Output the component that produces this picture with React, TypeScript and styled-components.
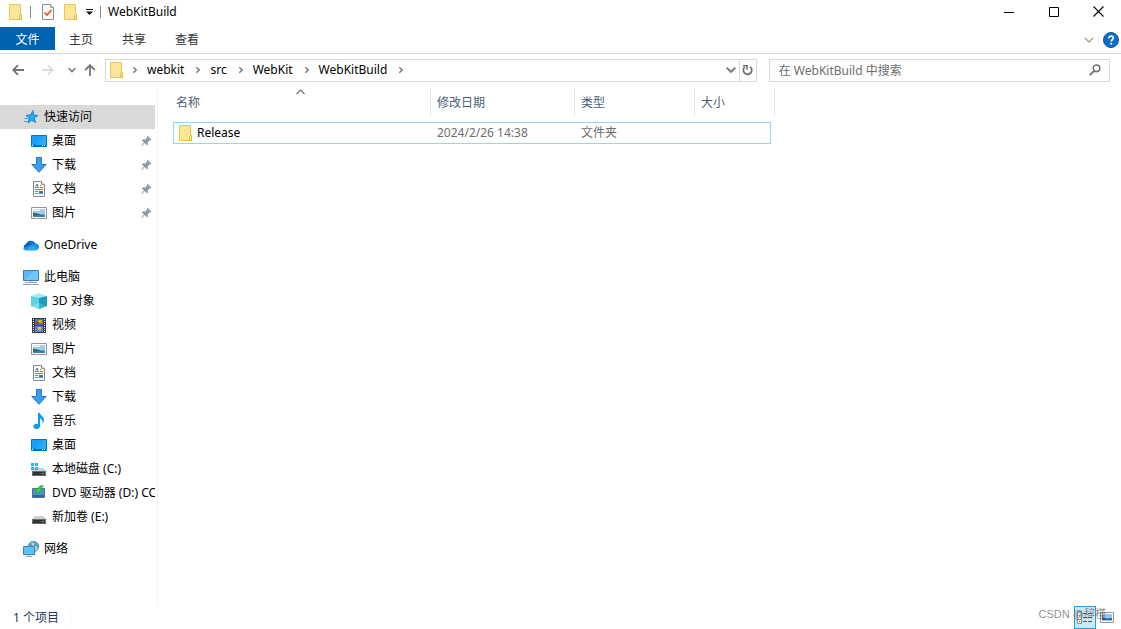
import React from "react";
import styled, { createGlobalStyle, css } from "styled-components";

const Global = createGlobalStyle`
  *, *::before, *::after { box-sizing: border-box; }
  html, body { margin: 0; padding: 0; background: #fff; }
  body, button, input, table {
    font-family: "Noto Sans", "Noto Sans CJK SC", sans-serif;
    font-size: 12px;
    line-height: 16px;
    color: #000;
  }
  button { border: 0; padding: 0; margin: 0; background: none; cursor: default; }
  a { color: inherit; text-decoration: none; }
  svg { display: block; flex: none; }
`;

/* ---------- layout ---------- */

const Window = styled.div`
  display: flex;
  flex-direction: column;
  min-height: 100vh;
  background: #fff;
`;

const TitleBar = styled.header`
  display: flex;
  align-items: center;
  height: 27px;
  padding: 0 0 4px 8px;
`;

const QuickButton = styled.button<{ $width?: number }>`
  display: flex;
  align-items: center;
  justify-content: center;
  width: ${(p) => p.$width ?? 16}px;
  height: 20px;
`;

const Separator = styled.span<{ $before: number; $after: number }>`
  width: 1px;
  height: 12px;
  margin: 0 ${(p) => p.$after}px 0 ${(p) => p.$before}px;
  background: #8a8a8a;
`;

const Title = styled.h1`
  flex: 1;
  margin: 0;
  font-size: 12px;
  font-weight: 400;
  line-height: 16px;
`;

const CaptionButton = styled.button`
  display: flex;
  align-items: center;
  justify-content: center;
  width: 45px;
  height: 23px;
`;

const Ribbon = styled.nav`
  display: flex;
  align-items: flex-start;
  height: 27px;
  border-bottom: 1px solid #dadbdc;
`;

const Tab = styled.button<{ $file?: boolean }>`
  height: 23px;
  padding: 2px 14px 0;
  margin-right: 1px;
  width: 52px;
  color: #333;
  white-space: nowrap;
  ${(p) =>
    p.$file &&
    css`
      width: 55px;
      background: #0063b1;
      color: #fff;
      margin-right: 0;
    `}
`;

const RibbonTools = styled.div`
  display: flex;
  align-items: center;
  gap: 9px;
  height: 26px;
  margin-left: auto;
  padding-right: 2px;
`;

const AddressRow = styled.div`
  display: flex;
  align-items: center;
  height: 34px;
  padding: 0 11px 2px 9px;
`;

const NavButton = styled.button<{ $width: number }>`
  display: flex;
  align-items: center;
  justify-content: center;
  width: ${(p) => p.$width}px;
  height: 20px;
`;

const AddressBox = styled.div`
  display: flex;
  align-items: center;
  flex: 1;
  height: 23px;
  padding-left: 4px;
  border: 1px solid #d9d9d9;
`;

const Crumbs = styled.ol`
  display: flex;
  align-items: center;
  flex: 1;
  margin: 0;
  padding: 0 0 1px 8px;
  list-style: none;
`;

const Crumb = styled.li`
  display: flex;
  align-items: center;
  a { padding: 0 11px 0 9px; }
`;

const RefreshButton = styled.button`
  display: flex;
  align-items: center;
  justify-content: center;
  width: 17px;
  height: 21px;
  border-left: 1px solid #d9d9d9;
`;

const SearchBox = styled.label`
  display: flex;
  align-items: center;
  flex: 0 0 31%;
  height: 23px;
  margin-left: 12px;
  padding: 0 8px 0 9px;
  border: 1px solid #d9d9d9;
`;

const SearchInput = styled.input`
  flex: 1;
  min-width: 0;
  height: 20px;
  padding: 0;
  border: 0;
  outline: 0;
  background: none;
  &::placeholder { color: #6d6d6d; opacity: 1; }
`;

const Body = styled.div`
  display: flex;
  flex: 1;
`;

const Sidebar = styled.nav`
  flex: none;
  width: 158px;
  padding: 17px 2px 0 0;
  border-right: 1px solid #f4f4f4;
`;

const Group = styled.ul`
  margin: 0 0 8px;
  padding: 0;
  list-style: none;
`;

const Item = styled.a<{ $child?: boolean; $selected?: boolean }>`
  display: flex;
  align-items: center;
  gap: 5px;
  height: 24px;
  padding: 0 0 0 ${(p) => (p.$child ? 31 : 23)}px;
  background: ${(p) => (p.$selected ? "#d9d9d9" : "transparent")};
`;

const ItemLabel = styled.span`
  flex: 1;
  overflow: hidden;
  white-space: nowrap;
`;

const PinSlot = styled.span`
  margin-right: 3px;
`;

const Content = styled.main`
  flex: 1;
  min-width: 0;
  padding-left: 15px;
`;

const FileTable = styled.table`
  table-layout: fixed;
  width: 602px;
  border-spacing: 0;
`;

const HeadCell = styled.th<{ $width: number }>`
  position: relative;
  width: ${(p) => p.$width}px;
  padding: 0 0 6px;
  text-align: left;
  font-weight: 400;
`;

const HeadButton = styled.button<{ $first?: boolean }>`
  display: block;
  width: 100%;
  height: 28px;
  padding: 1px 0 0 ${(p) => (p.$first ? 3 : 6)}px;
  border-right: 1px solid #e5e5e5;
  text-align: left;
  color: #4c607a;
`;

const SortMark = styled.span`
  position: absolute;
  top: 1px;
  left: 50%;
  margin-left: -6px;
`;

const FileRow = styled.tr`
  position: relative;
  height: 22px;
  &::after {
    content: "";
    position: absolute;
    inset: 0 4px 0 0;
    border: 1px solid #99d1ff;
    pointer-events: none;
  }
`;

const Cell = styled.td`
  padding: 0 0 0 6px;
  color: #6d6d6d;
`;

const FileName = styled.div`
  display: flex;
  align-items: center;
  gap: 4px;
  color: #000;
`;

const StatusBar = styled.footer`
  display: flex;
  align-items: center;
  position: relative;
  height: 23px;
  padding: 0 3px 0 13px;
  color: #1e395b;
`;

const StatusText = styled.span`
  padding-right: 11px;
  margin-right: auto;
  border-right: 1px solid #f4f4f4;
`;

const ViewButton = styled.button<{ $active?: boolean }>`
  display: flex;
  align-items: center;
  justify-content: center;
  width: 22px;
  height: 23px;
  border: 1px solid ${(p) => (p.$active ? "#26a0da" : "transparent")};
  background: ${(p) => (p.$active ? "#cbe8f6" : "none")};
`;

const Watermark = styled.span`
  position: absolute;
  right: 15px;
  top: 0;
  font-family: "Liberation Sans", "Noto Sans CJK SC", sans-serif;
  font-size: 11px;
  color: rgba(90, 90, 90, 0.7);
  pointer-events: none;
`;

/* ---------- icons ---------- */

const FolderIcon = () => (
  <svg width="14" height="16" viewBox="0 0 14 16">
    <path d="M.5.5h11v10h1v5H.5z" fill="#ffe597" stroke="#eac754" />
    <path d="M10.5 15.5v-4l1-1h1v5z" fill="#ffe9a2" stroke="#e3b93a" />
  </svg>
);

const PropertiesIcon = () => (
  <svg width="12" height="16" viewBox="0 0 12 16">
    <path d="M.5.5h8l3 3v12H.5z" fill="#f8f8f8" stroke="#8b8b8b" />
    <path d="M8.5.5v3h3" fill="#ddd" stroke="#9b9b9b" />
    <path d="M2.500 8.500l2.500 2.500 4.500-5" fill="none" stroke="#e8531f" strokeWidth="1.700" />
  </svg>
);

const CustomizeIcon = () => (
  <svg width="7" height="6" viewBox="0 0 7 6">
    <path d="M0 0h7v1H0zM0 2.500h7L3.500 6z" fill="#111" />
  </svg>
);

const MinimizeIcon = () => (
  <svg width="10" height="10" viewBox="0 0 10 10"><path d="M0 5h10v1H0z" /></svg>
);
const MaximizeIcon = () => (
  <svg width="10" height="10" viewBox="0 0 10 10"><path d="M.5.5h9v9h-9z" fill="none" stroke="#000" /></svg>
);
const CloseIcon = () => (
  <svg width="11" height="11" viewBox="0 0 11 11"><path d="M.5.5l10 10M10.500.5l-10 10" fill="none" stroke="#000" strokeWidth="1.100" /></svg>
);

const ChevronDown = ({ size = 8, color = "#777", weight = 1.5 }: { size?: number; color?: string; weight?: number }) => (
  <svg width={size} height={size} viewBox="0 0 8 8">
    <path d="M.6 2.200L4 5.600l3.400-3.400" fill="none" stroke={color} strokeWidth={weight} />
  </svg>
);

const ChevronRight = () => (
  <svg width="6" height="8" viewBox="0 0 6 8">
    <path d="M1.300 1.200L4.200 4 1.300 6.800" fill="none" stroke="#777" strokeWidth="1.500" />
  </svg>
);

const SortIcon = () => (
  <svg width="9" height="6" viewBox="0 0 9 6">
    <path d="M.5 5l4-4 4 4" fill="none" stroke="#6b6b6b" strokeWidth="1.100" />
  </svg>
);

const ArrowIcon = ({ turn = 0, color = "#757575" }: { turn?: number; color?: string }) => (
  <svg width="12" height="12" viewBox="0 0 12 12">
    <path
      d="M12 6H1.500M6 1.200L1.200 6 6 10.800"
      transform={`rotate(${turn} 6 6)`}
      fill="none"
      stroke={color}
      strokeWidth="1.800"
    />
  </svg>
);

const HelpIcon = () => (
  <svg width="16" height="16" viewBox="0 0 16 16">
    <circle cx="8" cy="8" r="7.500" fill="#0f6fc8" stroke="#0a569e" />
    <path d="M5.800 6.200c0-2.900 4.600-2.700 4.500-.1 0 1.500-2.100 1.600-2.100 3.400" fill="none" stroke="#fff" strokeWidth="1.700" />
    <path d="M7.300 10.800h1.800v1.800H7.300z" fill="#fff" />
  </svg>
);

const RefreshIcon = () => (
  <svg width="11" height="12" viewBox="0 0 11 12">
    <path d="M8.200 2.900A4.200 4.200 0 1 1 2.600 3.200" fill="none" stroke="#6b6b6b" strokeWidth="1.700" />
    <path d="M1 1.700h4v4" fill="none" stroke="#6b6b6b" strokeWidth="1.500" />
  </svg>
);

const SearchIcon = () => (
  <svg width="12" height="12" viewBox="0 0 12 12">
    <circle cx="7.500" cy="4.300" r="3.300" fill="none" stroke="#707070" strokeWidth="1.600" />
    <path d="M5.200 6.800L.8 11.200" stroke="#707070" strokeWidth="1.900" />
  </svg>
);

const StarIcon = () => (
  <svg width="16" height="16" viewBox="0 0 16 16">
    <path d="M9.800 1.500l.9 4.500 4.300.4-3.700 2.600 1.300 4.500-3.900-2.200L5 14l1.200-4.800L3.300 6.300l4.300-.5z" fill="#27a9f2" stroke="#0b7fcb" strokeWidth=".8" />
    <path d="M1.500 9.500h3.500M1 12.500h3.500M3 7.500h2" stroke="#3f9edc" />
  </svg>
);

const DesktopIcon = () => (
  <svg width="16" height="16" viewBox="0 0 16 16">
    <path d="M.5 2.500h15v11H.5z" fill="#17a1fb" stroke="#0873bb" />
    <path d="M6 12L13 3h2v9z" fill="#3db3ff" opacity=".6" />
    <path d="M1 12h14v1H1z" fill="#0a66a8" />
    <path d="M1 12h1v1H1zM11 12h1v1h-1zM13 12h1v1h-1z" fill="#fff" />
  </svg>
);

const DownloadIcon = () => (
  <svg width="16" height="16" viewBox="0 0 16 16">
    <path d="M5.500.5h5v7h4.700L8 15.300.8 7.500h4.700z" fill="#3f9bea" stroke="#2b7cc9" />
  </svg>
);

const DocumentIcon = () => (
  <svg width="16" height="16" viewBox="0 0 16 16">
    <path d="M2.500.5h8l3 3v12h-11z" fill="#fff" stroke="#888" />
    <path d="M10.500.5v3h3" fill="#e4e4e4" stroke="#999" />
    <path d="M4 6.500h4M9 4.500h1M9 6.500h3M4 8.500h8M4 10.500h3M4 12.500h3M8 12.500h4" stroke="#3d9be0" />
    <path d="M4.500 5.500l1.500-2.500 1 3" fill="none" stroke="#1d7cc4" />
    <path d="M8 10h4v2H8z" fill="#2b7a9c" />
  </svg>
);

const PictureIcon = () => (
  <svg width="16" height="16" viewBox="0 0 16 16">
    <path d="M.5 2.500h15v11H.5z" fill="#fff" stroke="#959595" />
    <path d="M2 4h12v8H2z" fill="#a2cdf3" />
    <path d="M2 4h7v2H2z" fill="#dceefa" />
    <path d="M2 7.500l4 .8 4 1.200 4 .3V12H2z" fill="#3c6c68" />
    <path d="M2 11l5-1 7 .5V12H2z" fill="#3b7eb0" />
  </svg>
);

const CloudIcon = () => (
  <svg width="16" height="16" viewBox="0 0 16 16">
    <path d="M3.200 13.300a3.200 3.200 0 0 1-.2-6.200A5.200 5.200 0 0 1 12.400 6.400 3.500 3.500 0 0 1 13 13.300z" fill="#0a5fb4" />
    <path d="M5 5.500a5 5 0 0 1 7.400.9l-2.600 2.400z" fill="#0f74cf" />
    <path d="M3 13.300c-2 0-2.700-1.300-2.700-2.300L8 8l5-1.500c2 .4 3 2 2.700 3.800z" fill="#1c93e3" />
    <path d="M2 13L9.500 9l6.200 2.300c-.4 1.200-1.300 2-2.700 2H3.200c-.6 0-.9-.1-1.200-.3z" fill="#2aa5f0" />
  </svg>
);

const ComputerIcon = () => (
  <svg width="16" height="16" viewBox="0 0 16 16">
    <path d="M.5 1.500h15v10H.5z" fill="#56bbfa" stroke="#45799f" />
    <path d="M1 11L12 2h3v9z" fill="#7fd0ff" opacity=".6" />
    <path d="M6 12h4v1H6z" fill="#d4dde3" />
    <path d="M2 13.500h12M0 15.500h16" stroke="#8ea3b3" />
  </svg>
);

const CubeIcon = () => (
  <svg width="16" height="16" viewBox="0 0 16 16">
    <path d="M0 3l8-3 8 3-8 3z" fill="#a8ecf3" />
    <path d="M0 3l8 2v11l-8-3z" fill="#5cd0de" />
    <path d="M16 3L8 5v11l8-3z" fill="#1a9fb6" />
    <path d="M0 13l8-3v6z" fill="#8be5ee" opacity=".7" />
    <path d="M16 13l-8-3v6z" fill="#37bccf" opacity=".8" />
  </svg>
);

const VideoIcon = () => (
  <svg width="16" height="16" viewBox="0 0 16 16">
    <path d="M1 1h14v15H1z" fill="#3a3a3a" />
    <path d="M4 2h8v6H4z" fill="#4674c2" />
    <path d="M4 9h8v6H4z" fill="#5b84d6" />
    <path d="M7 3h4v3H7z" fill="#e0a033" />
    <path d="M5 5h3v2H5z" fill="#a83a32" />
    <path d="M7 10h3v3H7z" fill="#e6bd3c" />
    <path d="M2.500 2v13M13.500 2v13" stroke="#eee" strokeDasharray="1 1" />
  </svg>
);

const MusicIcon = () => (
  <svg width="16" height="16" viewBox="0 0 16 16">
    <path d="M7 0h2c.3 2.800 4 3.500 4 7 0 1.500-.6 2.700-1.500 3.500C12 7.800 10.800 6 9 5.500V13c0 1.800-1.500 3-3.500 3S2.300 14.900 2.300 13.500c0-1.800 2.200-3.200 4.700-2.500z" fill="#0c9bf2" />
  </svg>
);

const Drive = () => (
  <>
    <path d="M3.500 7h9L15 10H1z" fill="#cfcfcf" />
    <path d="M1 10h14v5H1z" fill="#6b6b6b" />
    <path d="M2 11h12v3H2z" fill="#333" />
    <path d="M11 12h2v1h-2z" fill="#47dc52" />
  </>
);

const SystemDiskIcon = () => (
  <svg width="16" height="16" viewBox="0 0 16 16">
    <Drive />
    <path d="M0 2h3v3H0zM4 2h3v3H4zM0 6h3v3H0zM4 6h3v3H4z" fill="#16bff0" />
  </svg>
);

const DiskIcon = () => (
  <svg width="16" height="16" viewBox="0 0 16 16"><Drive /></svg>
);

const DvdIcon = () => (
  <svg width="16" height="16" viewBox="0 0 16 16">
    <path d="M1.500 3.500h12v9h-12z" fill="#4f8fd0" stroke="#5a6f88" />
    <path d="M2 10h11v2H2z" fill="#2f66a8" />
    <path d="M12.500.8L9.500 4.500 11 6.500l-6 2-.5-5.500L6.500 4 9 .8z" fill="#35d14d" stroke="#1b9a36" strokeWidth=".6" />
  </svg>
);

const NetworkIcon = () => (
  <svg width="16" height="16" viewBox="0 0 16 16">
    <circle cx="10.500" cy="5.500" r="5.200" fill="#5c9cc4" stroke="#3f769a" strokeWidth=".6" />
    <path d="M8 2c2-1.500 4 0 3 1.500s1 2 3 1.500l.5 3-2 1.500z" fill="#b5dbe6" />
    <path d="M.5 5.500h11v8H.5z" fill="#5dc1fb" stroke="#3c82b1" />
    <path d="M3 15.500h6" stroke="#8ea3b3" />
    <path d="M5 14h2v1H5z" fill="#bcc8d0" />
  </svg>
);

const PinIcon = () => (
  <svg width="11" height="12" viewBox="0 0 11 12">
    <path d="M6.500.8l4 4-1.200.6-.5-.2-1.900 2 .2 2.300-1 .8-2.300-2.200L.8 11l-.5-.4 2.600-3.200L.9 5.300l.8-1 2.400.3 2-2-.2-.7z" fill="#8d99a3" />
  </svg>
);

const DetailsIcon = () => (
  <svg width="16" height="14" viewBox="0 0 16 14">
    <path d="M.5.5h4v12h-4z" fill="#fff" stroke="#8b8b8b" />
    <path d="M1 4.500h3M1 8.500h3" stroke="#aaa" />
    <path d="M2 10h1v1H2z" fill="#c22" />
    <path d="M6 2.500h4M11 2.500h4M6 6.500h4M11 6.500h4M6 10.500h4M11 10.500h4" stroke="#556" />
  </svg>
);

const LargeIconsIcon = () => (
  <svg width="14" height="11" viewBox="0 0 14 11">
    <path d="M.5.5h13v10H.5z" fill="#fff" stroke="#959595" />
    <path d="M2 2h10v7H2z" fill="#8fc6f2" />
    <path d="M2 5l5 1.500 5-.5v2H2z" fill="#2d6288" />
  </svg>
);

/* ---------- data ---------- */

type Entry = { label: string; icon: React.ReactNode; pinned?: boolean };
type Section = { head: Entry; selected?: boolean; children: Entry[] };

const sections: Section[] = [
  {
    head: { label: "快速访问", icon: <StarIcon /> },
    selected: true,
    children: [
      { label: "桌面", icon: <DesktopIcon />, pinned: true },
      { label: "下载", icon: <DownloadIcon />, pinned: true },
      { label: "文档", icon: <DocumentIcon />, pinned: true },
      { label: "图片", icon: <PictureIcon />, pinned: true },
    ],
  },
  { head: { label: "OneDrive", icon: <CloudIcon /> }, children: [] },
  {
    head: { label: "此电脑", icon: <ComputerIcon /> },
    children: [
      { label: "3D 对象", icon: <CubeIcon /> },
      { label: "视频", icon: <VideoIcon /> },
      { label: "图片", icon: <PictureIcon /> },
      { label: "文档", icon: <DocumentIcon /> },
      { label: "下载", icon: <DownloadIcon /> },
      { label: "音乐", icon: <MusicIcon /> },
      { label: "桌面", icon: <DesktopIcon /> },
      { label: "本地磁盘 (C:)", icon: <SystemDiskIcon /> },
      { label: "DVD 驱动器 (D:) CC", icon: <DvdIcon /> },
      { label: "新加卷 (E:)", icon: <DiskIcon /> },
    ],
  },
  { head: { label: "网络", icon: <NetworkIcon /> }, children: [] },
];

const columns = [
  { label: "名称", width: 258 },
  { label: "修改日期", width: 144 },
  { label: "类型", width: 120 },
  { label: "大小", width: 80 },
];

const crumbs = ["webkit", "src", "WebKit", "WebKitBuild"];

export default function App() {
  return (
    <Window>
      <Global />
      <TitleBar>
        <QuickButton aria-label="窗口菜单"><FolderIcon /></QuickButton>
        <Separator $before={6} $after={9} />
        <QuickButton aria-label="属性"><PropertiesIcon /></QuickButton>
        <QuickButton aria-label="新建文件夹" $width={30}><FolderIcon /></QuickButton>
        <QuickButton aria-label="自定义快速访问工具栏" $width={7}><CustomizeIcon /></QuickButton>
        <Separator $before={7} $after={7} />
        <Title>WebKitBuild</Title>
        <CaptionButton aria-label="最小化"><MinimizeIcon /></CaptionButton>
        <CaptionButton aria-label="最大化"><MaximizeIcon /></CaptionButton>
        <CaptionButton aria-label="关闭"><CloseIcon /></CaptionButton>
      </TitleBar>

      <Ribbon>
        <Tab $file>文件</Tab>
        <Tab>主页</Tab>
        <Tab>共享</Tab>
        <Tab>查看</Tab>
        <RibbonTools>
          <button aria-label="展开功能区"><ChevronDown size={10} color="#a0a0a0" weight={1} /></button>
          <button aria-label="帮助"><HelpIcon /></button>
        </RibbonTools>
      </Ribbon>

      <AddressRow>
        <NavButton $width={18} aria-label="后退"><ArrowIcon /></NavButton>
        <NavButton $width={42} aria-label="前进"><ArrowIcon turn={180} color="#dcdcdc" /></NavButton>
        <NavButton $width={6} aria-label="最近浏览的位置"><ChevronDown size={8} /></NavButton>
        <NavButton $width={30} aria-label="上移"><ArrowIcon turn={90} /></NavButton>
        <AddressBox>
          <FolderIcon />
          <Crumbs>
            <Crumb><ChevronRight /></Crumb>
            {crumbs.map((name) => (
              <Crumb key={name}>
                <a href="#">{name}</a>
                <ChevronRight />
              </Crumb>
            ))}
          </Crumbs>
          <NavButton $width={15} aria-label="以前的位置"><ChevronDown size={10} /></NavButton>
          <RefreshButton aria-label="刷新"><RefreshIcon /></RefreshButton>
        </AddressBox>
        <SearchBox>
          <SearchInput type="text" aria-label="搜索" placeholder="在 WebKitBuild 中搜索" />
          <SearchIcon />
        </SearchBox>
      </AddressRow>

      <Body>
        <Sidebar>
          {sections.map(({ head, selected, children }) => (
            <Group key={head.label}>
              <li>
                <Item href="#" $selected={selected}>
                  {head.icon}
                  <ItemLabel>{head.label}</ItemLabel>
                </Item>
              </li>
              {children.map((entry) => (
                <li key={entry.label}>
                  <Item href="#" $child>
                    {entry.icon}
                    <ItemLabel>{entry.label}</ItemLabel>
                    {entry.pinned && <PinSlot><PinIcon /></PinSlot>}
                  </Item>
                </li>
              ))}
            </Group>
          ))}
        </Sidebar>

        <Content>
          <FileTable>
            <thead>
              <tr>
                {columns.map((column, index) => (
                  <HeadCell key={column.label} $width={column.width}>
                    <HeadButton $first={index === 0}>{column.label}</HeadButton>
                    {index === 0 && <SortMark><SortIcon /></SortMark>}
                  </HeadCell>
                ))}
              </tr>
            </thead>
            <tbody>
              <FileRow>
                <Cell>
                  <FileName><FolderIcon />Release</FileName>
                </Cell>
                <Cell>2024/2/26 14:38</Cell>
                <Cell>文件夹</Cell>
                <Cell />
              </FileRow>
            </tbody>
          </FileTable>
        </Content>
      </Body>

      <StatusBar>
        <StatusText>1 个项目</StatusText>
        <ViewButton $active aria-label="详细信息"><DetailsIcon /></ViewButton>
        <ViewButton aria-label="大图标"><LargeIconsIcon /></ViewButton>
        <Watermark>CSDN @辞槿</Watermark>
      </StatusBar>
    </Window>
  );
}
